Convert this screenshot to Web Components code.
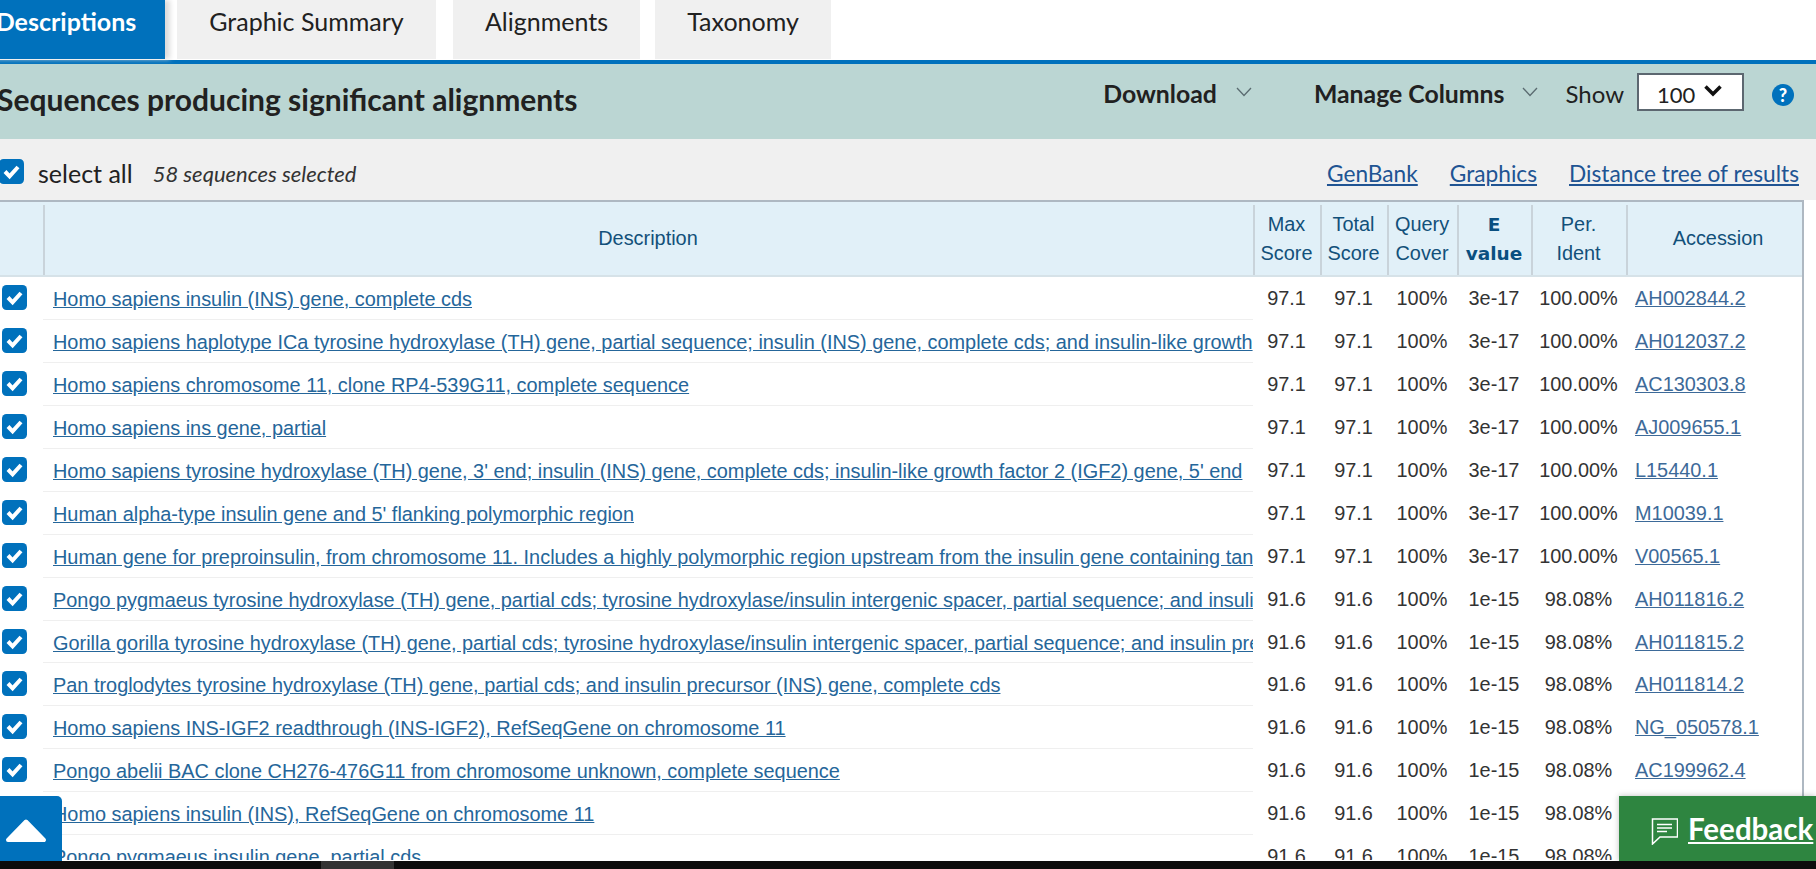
<!DOCTYPE html>
<html><head><meta charset="utf-8"><style>
html,body{margin:0;padding:0;height:869px;overflow:hidden;background:#fff}
</style></head><body>
<blast-app></blast-app>
<script>
const rows=[
["Homo sapiens insulin (INS) gene, complete cds","97.1","3e-17","100.00%","AH002844.2"],
["Homo sapiens haplotype ICa tyrosine hydroxylase (TH) gene, partial sequence; insulin (INS) gene, complete cds; and insulin-like growth","97.1","3e-17","100.00%","AH012037.2"],
["Homo sapiens chromosome 11, clone RP4-539G11, complete sequence","97.1","3e-17","100.00%","AC130303.8"],
["Homo sapiens ins gene, partial","97.1","3e-17","100.00%","AJ009655.1"],
["Homo sapiens tyrosine hydroxylase (TH) gene, 3' end; insulin (INS) gene, complete cds; insulin-like growth factor 2 (IGF2) gene, 5' end","97.1","3e-17","100.00%","L15440.1"],
["Human alpha-type insulin gene and 5' flanking polymorphic region","97.1","3e-17","100.00%","M10039.1"],
["Human gene for preproinsulin, from chromosome 11. Includes a highly polymorphic region upstream from the insulin gene containing tan","97.1","3e-17","100.00%","V00565.1"],
["Pongo pygmaeus tyrosine hydroxylase (TH) gene, partial cds; tyrosine hydroxylase/insulin intergenic spacer, partial sequence; and insuli","91.6","1e-15","98.08%","AH011816.2"],
["Gorilla gorilla tyrosine hydroxylase (TH) gene, partial cds; tyrosine hydroxylase/insulin intergenic spacer, partial sequence; and insulin pre","91.6","1e-15","98.08%","AH011815.2"],
["Pan troglodytes tyrosine hydroxylase (TH) gene, partial cds; and insulin precursor (INS) gene, complete cds","91.6","1e-15","98.08%","AH011814.2"],
["Homo sapiens INS-IGF2 readthrough (INS-IGF2), RefSeqGene on chromosome 11","91.6","1e-15","98.08%","NG_050578.1"],
["Pongo abelii BAC clone CH276-476G11 from chromosome unknown, complete sequence","91.6","1e-15","98.08%","AC199962.4"],
["Homo sapiens insulin (INS), RefSeqGene on chromosome 11","91.6","1e-15","98.08%",""],
["Pongo pygmaeus insulin gene, partial cds","91.6","1e-15","98.08%",""]
];
const CHECK=`<svg width="25" height="25" viewBox="0 0 25 25"><rect width="25" height="25" rx="4.500" fill="#0071bc"/><path d="M6 12.500l4.600 4.800L19 8" fill="none" stroke="#fff" stroke-width="4"/></svg>`;
const COLS=`43px 1210px 67px 67px 70px 74px 95px 176px`;
const CHEV=`<path d="M1 2l7 7.500L15 2" fill="none" stroke="#5a6b70" stroke-width="1.300"/>`;

class TabBar extends HTMLElement{constructor(){super();this.attachShadow({mode:'open'}).innerHTML=`<style>
:host{display:flex;height:60px;margin-left:-33px;font:25px/42px "Lato",sans-serif;color:#212121}
div{background:#f0f0f0;text-align:center;padding-bottom:17px;height:42px;margin-right:15px}
.a{background:#0071bc;color:#fff;font-weight:700;width:198px;box-shadow:5px 0 5px #dcdcdc;margin-right:12px}
</style><div class="a">Descriptions</div><div style="width:259px;margin-right:17px">Graphic Summary</div><div style="width:187px">Alignments</div><div style="width:176px">Taxonomy</div>`}}
customElements.define('tab-bar',TabBar);

class ToolBar extends HTMLElement{constructor(){super();this.attachShadow({mode:'open'}).innerHTML=`<style>
:host{display:flex;align-items:flex-start;height:75px;background:#bbd6d3;border-top:4px solid #0071bc;font:25px "Lato",sans-serif;color:#212121}
h2{margin:0;font:700 30px/36px "Lato",sans-serif;margin:17px auto 0 -3px;white-space:nowrap}
b{font-weight:700;line-height:32px;margin-top:14px;font-size:24.800px}
.show{line-height:32px;margin:14px 13px 0 0;font-size:24px}
.sel{box-sizing:border-box;width:107px;height:38px;border:2px solid #5c6770;background:#fff;margin-top:9px;padding-left:18px;line-height:40px;display:flex;font-size:22px}
</style><h2>Sequences producing significant alignments</h2>
<b>Download</b><svg style="margin:22px 62px 0 19px" width="16" height="12" viewBox="0 0 16 12">${CHEV}</svg>
<b>Manage Columns</b><svg style="margin:22px 28px 0 17px" width="16" height="12" viewBox="0 0 16 12">${CHEV}</svg>
<span class="show">Show</span><span class="sel">100<svg style="margin:9px 0 0 8px" width="20" height="14" viewBox="0 0 20 14"><path d="M2.500 2.500l7.500 7.500 7.500-7.500" fill="none" stroke="#111" stroke-width="3.500"/></svg></span>
<svg style="margin:20px 22px 0 28px" width="22" height="22" viewBox="0 0 22 22"><circle cx="11" cy="11" r="11" fill="#0071bc"/><text x="11" y="17.500" text-anchor="middle" font-family="Lato,sans-serif" font-weight="900" font-size="18" fill="#fff">?</text></svg>`}}
customElements.define('tool-bar',ToolBar);

class SelectBar extends HTMLElement{constructor(){super();this.attachShadow({mode:'open'}).innerHTML=`<style>
:host{display:flex;align-items:center;height:61px;background:#f0f0f0;font:25px "Lato",sans-serif;color:#212121;box-sizing:border-box;padding-top:7px}
svg{margin-left:-1px;margin-top:-4px}
span{margin-left:14px}
i{font-size:22px;margin-left:20px;margin-right:auto;color:#333}
a{color:#205493;text-decoration:underline;margin-left:32px;font-size:22.700px}
a:last-child{margin-right:17px}
</style>${CHECK}<span>select all</span><i>58 sequences selected</i><a>GenBank</a><a>Graphics</a><a>Distance tree of results</a>`}}
customElements.define('select-bar',SelectBar);

class HitTable extends HTMLElement{constructor(){super();
const th=(t,x='')=>`<div class="th ${x}">${t}</div>`;
const r=rows.map(d=>`<div class="c">${CHECK}</div><div class="d"><a>${d[0]}</a></div><div class="n">${d[1]}</div><div class="n">${d[1]}</div><div class="n">100%</div><div class="n">${d[2]}</div><div class="n">${d[3]}</div><div class="ac">${d[4]?`<a>${d[4]}</a>`:''}</div>`).join('');
this.attachShadow({mode:'open'}).innerHTML=`<style>
:host{display:block;margin-right:12px;height:660px;box-sizing:border-box;border-top:2px solid #aeb8c2;border-right:2px solid #aeb8c2;overflow:hidden;font:19.900px "Liberation Sans",Arial,sans-serif;color:#333}
.g{display:grid;grid-template-columns:${COLS};grid-template-rows:75px;grid-auto-rows:42.950px}
.th{background:linear-gradient(#c9d3da,#c9d3da) 0 3px/2px 100% no-repeat,#e1f0f8;color:#12507a;display:flex;align-items:center;justify-content:center;text-align:center;line-height:29px;border-bottom:2px solid #d6e2e8;box-sizing:border-box}
.th:first-child{background:#e1f0f8}
.th.e{color:#0a4f80;font:700 18.500px/29px "DejaVu Sans",sans-serif}
.th.acc{padding-left:8px}
.c{padding:8px 0 0 2px;box-sizing:border-box}
.c svg{display:block}
.d{white-space:nowrap;overflow:hidden;border-bottom:1px solid #efefef;box-sizing:border-box;padding:11px 0 0 10px;line-height:22px}
a{color:#25669a;text-decoration:underline}
.n{text-align:center;padding-top:10px;line-height:22px}
.ac{padding:10px 0 0 9px;line-height:22px}
.ac a{color:#3d6a99}
</style><div class="g">${th('')}${th('Description')}${th('Max<br>Score')}${th('Total<br>Score')}${th('Query<br>Cover')}${th('E<br>value','e')}${th('Per.<br>Ident')}${th('Accession','acc')}${r}</div>`}}
customElements.define('hit-table',HitTable);

class BlastApp extends HTMLElement{constructor(){super();this.attachShadow({mode:'open'}).innerHTML=`<style>
:host{display:block;position:relative;width:1816px;height:869px;overflow:hidden}
.top{position:absolute;left:0;top:796px;width:62px;height:65px;background:#0071bc;border-top-right-radius:5px}
.top svg,.fb svg{display:block}
.fb{position:absolute;left:1619px;top:796px;width:197px;height:65px;background:#2e8540;color:#fff;font:700 29.500px "Lato",sans-serif;box-shadow:0 0 6px rgba(0,0,0,.25);display:flex;align-items:center;padding-left:32px;box-sizing:border-box;white-space:nowrap;overflow:hidden}
.fb svg{margin-top:6px}
.fb u{margin-left:10px}
.bar{position:absolute;left:0;top:861px;width:1816px;height:8px;background:#0c0c0c}
.bar div{margin-left:321px;width:73px;height:8px;background:#333}
</style><tab-bar></tab-bar><tool-bar></tool-bar><select-bar></select-bar><hit-table></hit-table>
<div class="top"><svg width="62" height="65" viewBox="0 0 62 65"><path d="M26 25.500L44 44H8z" fill="#fff" stroke="#fff" stroke-linejoin="round" stroke-width="4"/></svg></div>
<div class="fb"><svg width="27" height="27" viewBox="0 0 27 27"><path d="M1.500 1h25v18H9l-7.500 7zM6 6.500h15M6 10h15M6 13.500h10" fill="none" stroke="#fff" stroke-width="1.500"/></svg><u>Feedback</u></div>
<div class="bar"><div></div></div>`}}
customElements.define('blast-app',BlastApp);
</script></body></html>
